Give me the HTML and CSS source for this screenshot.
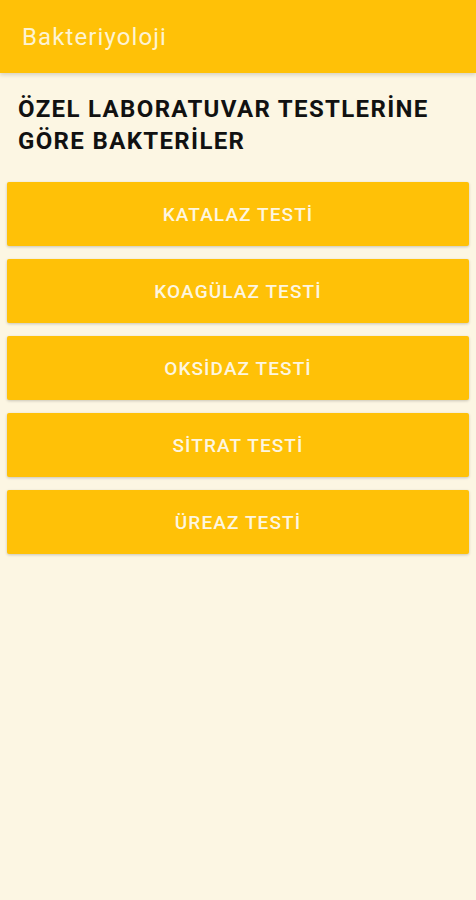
FILE: index.html
```html
<!DOCTYPE html>
<html lang="tr">
<head>
  <meta charset="UTF-8">
  <title>Bakteriyoloji</title>
  <link rel="stylesheet" href="styles.css">
</head>
<body>

<div class="toolbar">
  <span class="toolbar-title">Bakteriyoloji</span>
</div>

<div class="content">
  <h1 class="heading">ÖZEL LABORATUVAR TESTLERİNE GÖRE BAKTERİLER</h1>

  <div class="buttons">
    <button class="test-btn">KATALAZ TESTİ</button>
    <button class="test-btn">KOAGÜLAZ TESTİ</button>
    <button class="test-btn">OKSİDAZ TESTİ</button>
    <button class="test-btn">SİTRAT TESTİ</button>
    <button class="test-btn">ÜREAZ TESTİ</button>
  </div>
</div>

</body>
</html>
```

FILE: styles.css
```css
body {
  margin: 0;
  font-family: Roboto, "Noto Sans", sans-serif;
  background: #fcf6e3;
  height: 900px;
}
.toolbar {
  height: 73px;
  background: #ffc107;
  display: flex;
  align-items: center;
  padding-left: 22px;
  box-shadow: 0 2px 4px rgba(0, 0, 0, 0.15);
}
.toolbar-title {
  color: #fdf3d2;
  font-size: 24px;
  font-weight: 400;
  letter-spacing: 1.1px;
}
.content {
  padding: 0 6px;
}
.heading {
  margin: 20px 0 0 12px;
  font-size: 24px;
  font-weight: 700;
  line-height: 32px;
  letter-spacing: 1.35px;
  color: #111;
}
.buttons {
  display: flex;
  flex-direction: column;
  gap: 13px;
  margin-top: 25px;
}
.test-btn {
  height: 64px;
  margin: 0 1px;
  border: none;
  border-radius: 2px;
  background: #ffc107;
  color: #fdf6e0;
  font-family: Roboto, "Noto Sans", sans-serif;
  font-size: 19px;
  font-weight: 500;
  letter-spacing: 1.1px;
  box-shadow: 0 1px 3px rgba(0, 0, 0, 0.2);
}
```
